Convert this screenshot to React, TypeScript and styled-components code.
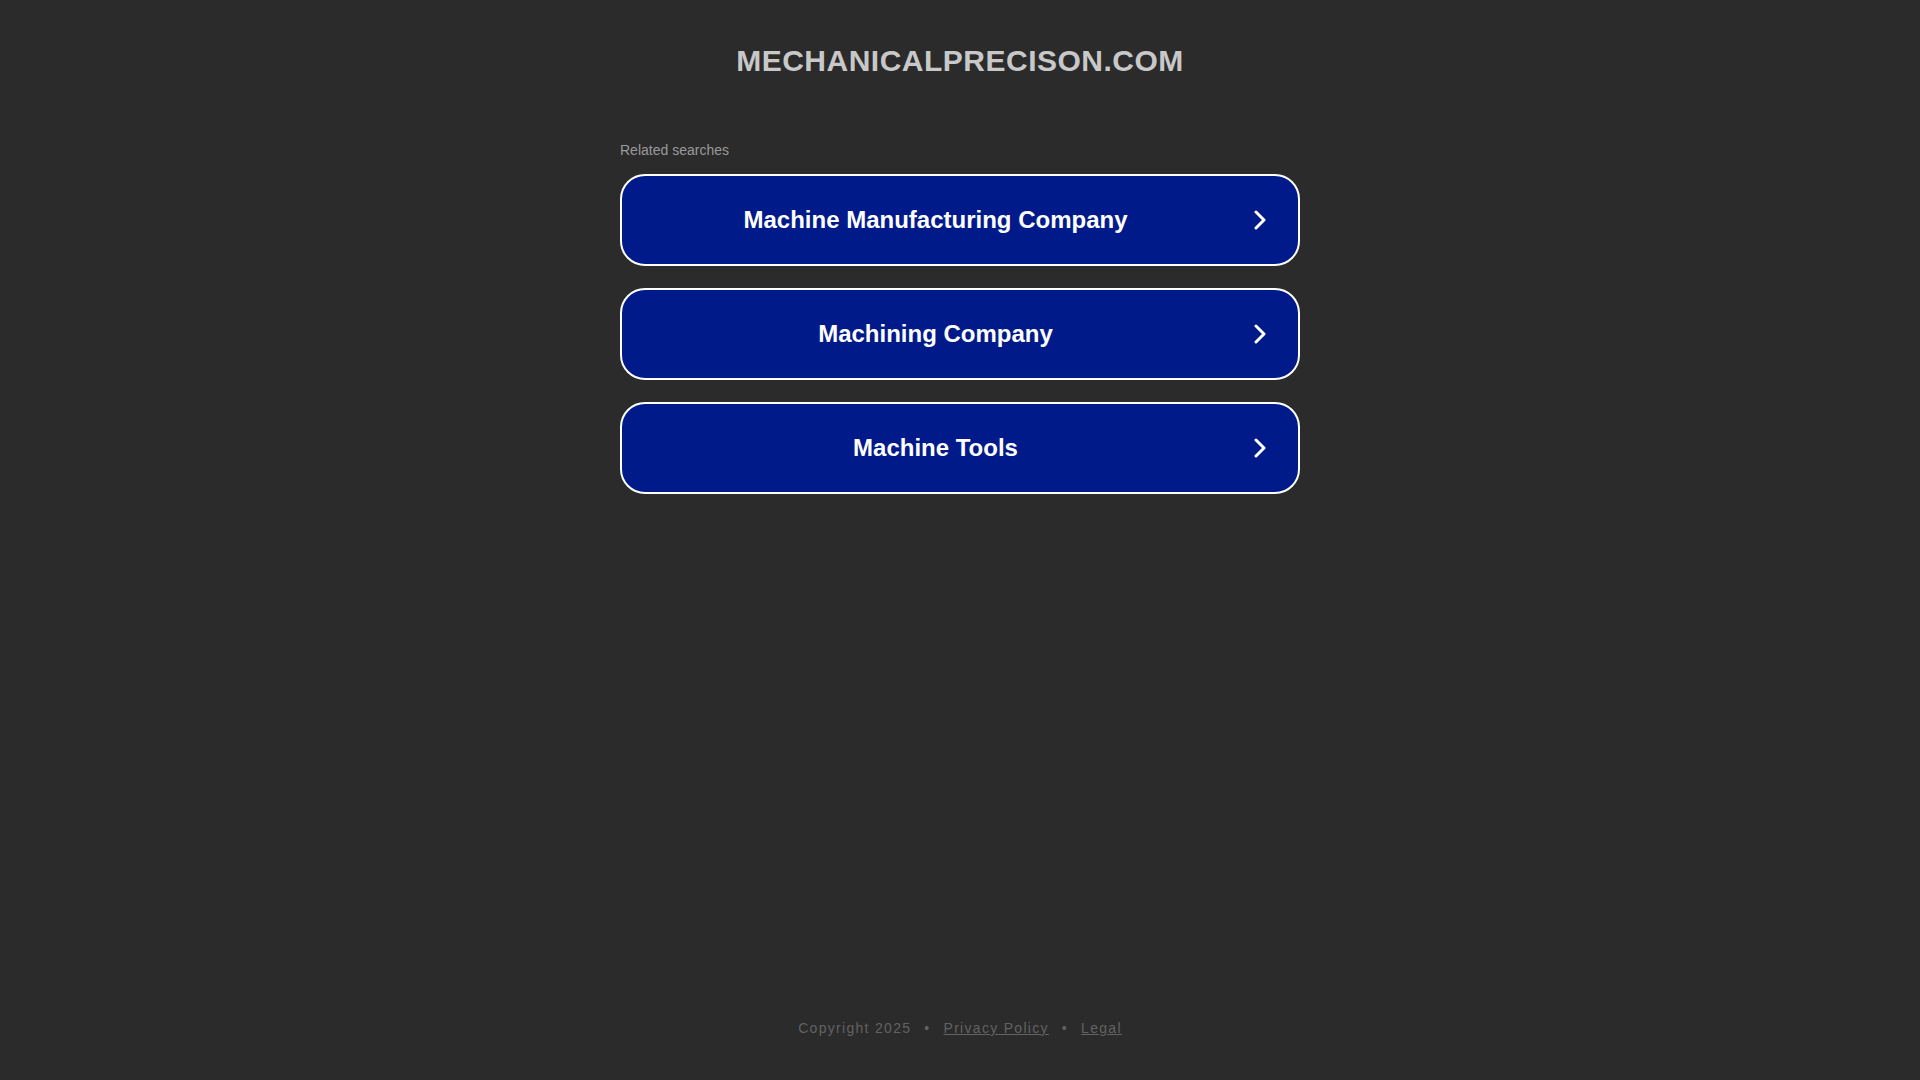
import styled, { createGlobalStyle } from "styled-components";

const GlobalStyle = createGlobalStyle`
  html, body {
    margin: 0;
    padding: 0;
    background: #2b2b2b;
    font-family: Arial, "Liberation Sans", Helvetica, sans-serif;
  }
`;

const searches = [
  "Machine Manufacturing Company",
  "Machining Company",
  "Machine Tools",
];

const Chevron = () => (
  <svg width="14" height="20" viewBox="0 0 14 20" fill="none">
    <polyline
      points="3,2 11,10 3,18"
      stroke="#ffffff"
      strokeWidth="3"
      strokeLinecap="round"
      strokeLinejoin="round"
    />
  </svg>
);

const App = () => {
  return (
    <Page>
      <GlobalStyle />
      <Header>
        <Domain>MECHANICALPRECISON.COM</Domain>
      </Header>
      <Main>
        <Related>Related searches</Related>
        <List>
          {searches.map((item) => (
            <SearchLink key={item} href="#">
              <LinkText>{item}</LinkText>
              <Arrow>
                <Chevron />
              </Arrow>
            </SearchLink>
          ))}
        </List>
      </Main>
      <Footer>
        <span>Copyright 2025</span>
        <span>•</span>
        <FooterLink href="#">Privacy Policy</FooterLink>
        <span>•</span>
        <FooterLink href="#">Legal</FooterLink>
      </Footer>
    </Page>
  );
};

const Page = styled.div`
  min-height: 100vh;
  display: flex;
  flex-direction: column;
  align-items: center;
`;

const Header = styled.header`
  padding-top: 44px;
  text-align: center;
`;

const Domain = styled.h1`
  margin: 0;
  font-size: 30px;
  line-height: 34px;
  font-weight: 700;
  letter-spacing: 0.5px;
  color: #c8c8c8;
`;

const Main = styled.main`
  width: 680px;
  margin-top: 64px;
  display: flex;
  flex-direction: column;
`;

const Related = styled.div`
  font-size: 14px;
  line-height: 16px;
  color: #9a9a9a;
  margin-bottom: 16px;
`;

const List = styled.div`
  display: flex;
  flex-direction: column;
  gap: 22px;
`;

const SearchLink = styled.a`
  box-sizing: border-box;
  height: 92px;
  display: flex;
  align-items: center;
  background: #011a8a;
  border: 2px solid #ffffff;
  border-radius: 25px;
  text-decoration: none;
  color: #ffffff;
`;

const LinkText = styled.span`
  flex: 1;
  text-align: center;
  font-size: 24px;
  font-weight: 700;
`;

const Arrow = styled.span`
  display: flex;
  align-items: center;
  padding-left: 4px;
  margin-right: 31px;
`;

const Footer = styled.footer`
  margin-top: auto;
  padding-bottom: 43px;
  display: flex;
  align-items: center;
  gap: 13px;
  font-size: 14px;
  line-height: 18px;
  letter-spacing: 1.3px;
  color: #626262;
`;

const FooterLink = styled.a`
  color: #626262;
  text-decoration: underline;
`;

export default App;
